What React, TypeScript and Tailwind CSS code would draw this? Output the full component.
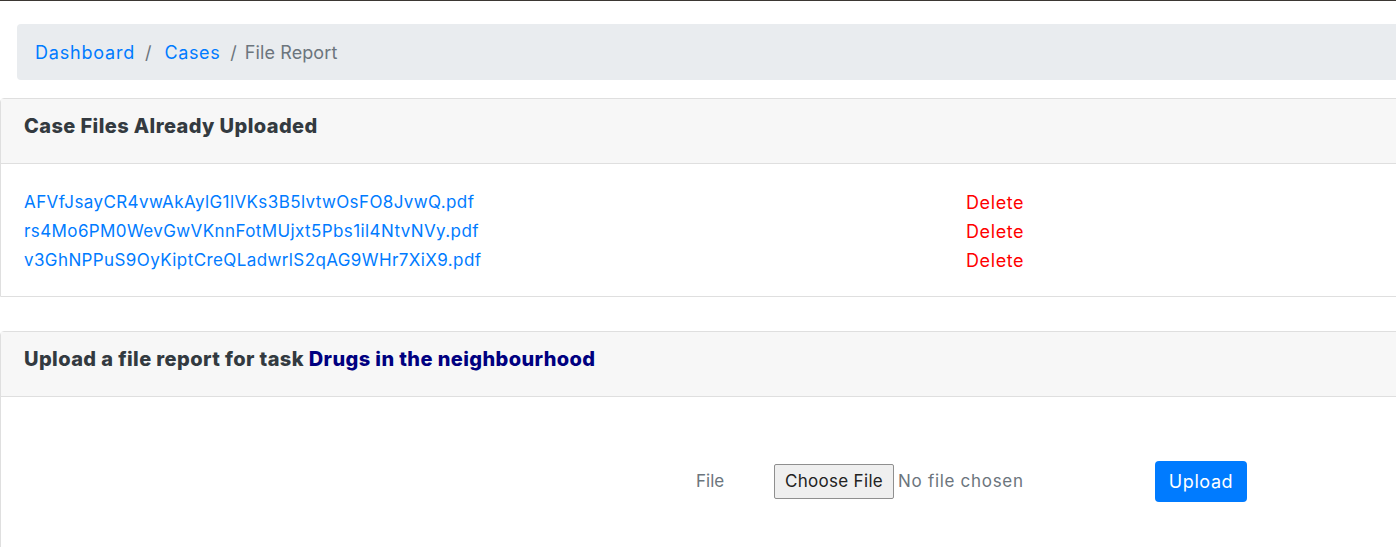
import React from "react";

const font = { fontFamily: "Inter, 'Noto Sans', sans-serif" };

export default function App() {
  const files = [
    "AFVfJsayCR4vwAkAylG1lVKs3B5lvtwOsFO8JvwQ.pdf",
    "rs4Mo6PM0WevGwVKnnFotMUjxt5Pbs1il4NtvNVy.pdf",
    "v3GhNPPuS9OyKiptCreQLadwrlS2qAG9WHr7XiX9.pdf",
  ];
  return (
    <div className="w-[1396px] h-[547px] overflow-hidden bg-white" style={font}>
      <div className="h-px bg-[#3b3733]" />
      <div className="pt-[23px] pl-[17px]">
        <div className="h-[56px] -mr-4 rounded-l bg-[#e9ecef] flex items-center pl-[18px] pt-[1px] text-[18px] text-[#6c757d]">
          <span className="text-[#007bff] tracking-[0.8px]">Dashboard</span>
          <span className="pl-[10px] pr-[10px]">/</span>
          <span className="text-[#007bff] ml-[3px] tracking-[0.6px]">Cases</span>
          <span className="pl-[10px] pr-[8px]">/</span>
          <span className="tracking-[0.1px]">File Report</span>
        </div>
      </div>

      <div className="mt-[18px] -mr-6 border border-[#dfdfdf] rounded-tl">
        <div className="h-[65px] bg-[#f7f7f7] border-b border-[#dfdfdf] flex items-center pl-[23px] pb-[10px]">
          <span className="text-[20px] font-extrabold tracking-[0.4px] text-[#333a40]">Case Files Already Uploaded</span>
        </div>
        <div className="pt-[24px] pb-[21px] pl-[23px]">
          {files.map((f) => (
            <div key={f} className="flex h-[29px] items-center text-[17px]">
              <span className="w-[942px] text-[#007bff] tracking-[0.4px]">{f}</span>
              <span className="text-[#ff0000] text-[18px] tracking-[0.6px]">Delete</span>
            </div>
          ))}
        </div>
      </div>

      <div className="mt-[34px] -mr-6 border border-[#dfdfdf] rounded-tl h-[260px]">
        <div className="h-[65px] bg-[#f7f7f7] border-b border-[#dfdfdf] flex items-center pl-[23px] pb-[11px]">
          <span className="text-[20px] font-extrabold tracking-[0.4px] text-[#333a40]">
            Upload a file report for task <span className="text-[#000080]">Drugs in the neighbourhood</span>
          </span>
        </div>
        <div className="flex items-center pt-[64px]">
          <span className="ml-[695px] w-[78px] text-[17px] text-[#6c757d]">File</span>
          <span className="h-[35px] px-[10px] flex items-center border border-[#8f8f8f] rounded-[2px] bg-[#efefef] text-[17px] tracking-[0.3px] text-[#222]">
            Choose File
          </span>
          <span className="ml-[4px] w-[257px] text-[17px] tracking-[0.7px] text-[#6c757d]">No file chosen</span>
          <span className="h-[41px] w-[92px] flex items-center justify-center rounded bg-[#007bff] text-white text-[18px] tracking-[0.6px]">
            Upload
          </span>
        </div>
      </div>
    </div>
  );
}
